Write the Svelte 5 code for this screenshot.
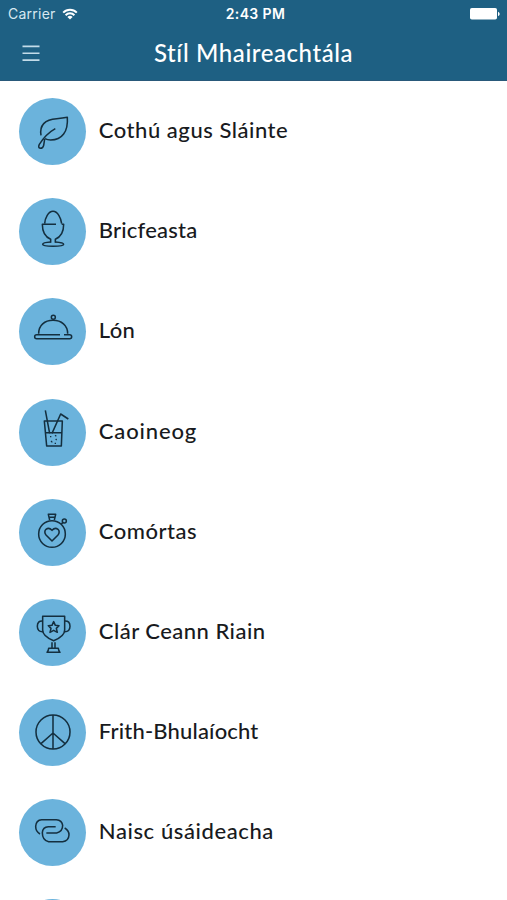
<script lang="ts">
  interface MenuItem {
    label: string;
    icon: string;
    spacing: number;
  }

  const items: MenuItem[] = [
    { label: 'Cothú agus Sláinte', icon: 'leaf', spacing: 0.53 },
    { label: 'Bricfeasta', icon: 'egg', spacing: 0.2 },
    { label: 'Lón', icon: 'cloche', spacing: 0.3 },
    { label: 'Caoineog', icon: 'drink', spacing: 0.85 },
    { label: 'Comórtas', icon: 'stopwatch', spacing: 0.5 },
    { label: 'Clár Ceann Riain', icon: 'trophy', spacing: 0.48 },
    { label: 'Frith-Bhulaíocht', icon: 'peace', spacing: 0.18 },
    { label: 'Naisc úsáideacha', icon: 'link', spacing: 0.6 },
    { label: '', icon: '', spacing: 0 },
  ];
</script>

<div class="screen">
  <header>
    <div class="status">
      <div class="carrier">
        <span>Carrier</span>
        <svg class="wifi" viewBox="0 0 16 12" width="16" height="12">
          <path d="M1.2 4.6a9.6 9.6 0 0 1 13.6 0M3.6 7.2a6.2 6.2 0 0 1 8.8 0" />
          <path class="dot" d="M8 11.6 5.4 9a3.7 3.7 0 0 1 5.2 0z" />
        </svg>
      </div>
      <span class="clock">2:43 PM</span>
      <svg class="battery" viewBox="0 0 30 12" width="30" height="12">
        <rect width="27" height="11.6" rx="1.8" />
        <path d="M28 3.7c2.2.8 2.2 3.6 0 4.4z" />
      </svg>
    </div>
    <nav>
      <button aria-label="Menu">
        <svg viewBox="0 0 18 17" width="18" height="17">
          <path d="M.5 1.4h17M.5 8.2h17M.5 15.1h17" />
        </svg>
      </button>
      <h1>Stíl Mhaireachtála</h1>
    </nav>
  </header>

  <ul>
    {#each items as item}
      <li>
        <div class="badge">
          <svg viewBox="-1 0 201 201">
            {#if item.icon === 'leaf'}
              <path d="M65 112C60 83 76 64 112 62Q130 61 144 58C147 101 128 126 94 126Q84 126 77 122" />
              <path d="M108 92C88 103 73 119 60 139Q55 149 63 151Q71 151 73 142L76 123" />
            {:else if item.icon === 'egg'}
              <path d="M76 77C77 60 87 40 101 40S125 60 127 77" />
              <path d="M110 79H69C69 102 77 117 94 124V134M127 79H133C133 102 125 117 108 124V134" />
              <path d="M94 132C78 133 70 135 70 139S82 145 101 145S133 143 133 139S124 133 108 132" />
            {:else if item.icon === 'cloche'}
              <circle cx="102" cy="58" r="6" />
              <path d="M58 107C58 82 76 67 101 67S145 82 145 107" />
              <path d="M122 110H52Q46 110 46 116T52 122H151Q157 122 157 116T151 110H134" />
            {:else if item.icon === 'drink'}
              <path d="M75 66H129L126 141H82ZM78 101H127" />
              <path d="M78 34 91 103M98 103 124 45 147 60" />
              <path class="fine" d="M92 113h4M107 109l4 3M95 126l4 4M109 120l3 3M106 133h4" />
            {:else if item.icon === 'stopwatch'}
              <circle cx="98" cy="105" r="40" />
              <path d="M91 63 87 46H109L105 63M91 55H105" />
              <path d="M126 75 131 70" />
              <circle cx="135" cy="66" r="6" />
              <path d="M98 126 80 108Q73 99 80 91Q89 84 98 94Q107 84 116 91Q123 99 116 108Z" />
            {:else if item.icon === 'trophy'}
              <path d="M70 52H136V93Q136 112 103 125Q70 112 70 93Z" />
              <path d="M70 66Q54 65 54 82Q54 99 71 98M136 66Q152 65 152 82Q152 99 135 98" />
              <path d="M98 130V147M107 130V147M88 148H117Q118 157 122 160H83Q87 157 88 148Z" />
              <path d="M103 68 108 79 119 80 111 88 114 100 103 94 92 100 95 88 87 80 98 79Z" />
            {:else if item.icon === 'peace'}
              <circle cx="101" cy="99" r="51" />
              <path d="M101 48V150M101 102 65 134M101 102 137 134" />
            {:else if item.icon === 'link'}
              <path d="M62 105Q49 98 49 82Q50 63 67 62H111Q128 63 130 79Q130 98 112 102H81" />
              <path d="M109 83H87Q70 84 69 101Q69 124 88 128H130Q148 126 149 108Q149 94 136 87" />
            {/if}
          </svg>
        </div>
        <span class="label" style="letter-spacing: {item.spacing}px">{item.label}</span>
      </li>
    {/each}
  </ul>
</div>

<style>
  :global(body) {
    margin: 0;
    overflow: hidden;
  }

  .screen {
    height: 900px;
    overflow: hidden;
    background: #fff;
    color: #181a20;
    font-family: Lato, 'Open Sans', sans-serif;
  }

  header {
    box-sizing: border-box;
    height: 81px;
    background: #1e6083;
    border-bottom: 1px solid #29597a;
    color: #fff;
  }

  .status {
    display: grid;
    grid-template-columns: 1fr auto 1fr;
    align-items: center;
    height: 27px;
    padding: 0 7px 0 8px;
    font-family: Inter, Roboto, sans-serif;
    font-size: 14px;
  }

  .carrier {
    display: flex;
    align-items: center;
    gap: 6px;
    color: #d7e8f1;
    letter-spacing: 0.25px;
  }

  .wifi {
    fill: none;
    stroke: #fff;
    stroke-width: 2;
  }

  .wifi .dot {
    fill: #fff;
    stroke: none;
  }

  .clock {
    padding-left: 3px;
    font-weight: 600;
    letter-spacing: 0.4px;
  }

  .battery {
    justify-self: end;
    fill: #fff;
  }

  nav {
    display: grid;
    grid-template-columns: 60px 1fr 60px;
    align-items: center;
    height: 53px;
  }

  button {
    display: flex;
    padding: 0;
    margin-left: 22px;
    border: 0;
    background: none;
  }

  button svg {
    fill: none;
    stroke: #c3dce9;
    stroke-width: 1.6;
  }

  h1 {
    margin: 0;
    padding-bottom: 2px;
    font-size: 24px;
    font-weight: 500;
    line-height: 30px;
    letter-spacing: 0.57px;
    text-align: center;
    white-space: nowrap;
  }

  ul {
    display: flex;
    flex-direction: column;
    gap: 33.15px;
    margin: 0;
    padding: 17.2px 0 0 19.3px;
    list-style: none;
  }

  li {
    display: flex;
    flex-shrink: 0;
    align-items: center;
    gap: 12.5px;
    height: 67px;
  }

  .badge {
    width: 67px;
    height: 67px;
    border-radius: 50%;
    background: #6bb3dc;
  }

  .badge svg {
    display: block;
    width: 100%;
    height: 100%;
    fill: none;
    stroke: #142f3f;
    stroke-width: 4.6;
    stroke-linejoin: round;
  }

  .badge .fine {
    stroke-width: 3.5;
  }

  .label {
    padding-bottom: 3px;
    font-size: 22px;
    font-weight: 500;
    line-height: 30px;
    white-space: nowrap;
  }
</style>
